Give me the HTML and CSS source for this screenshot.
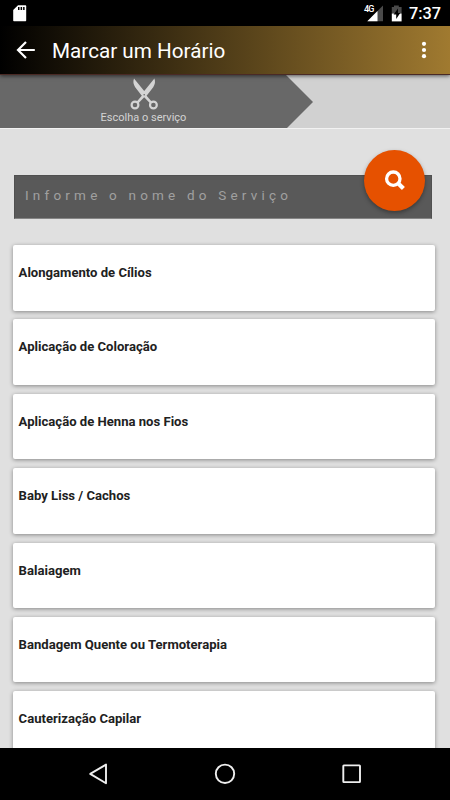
FILE: index.html
```
<!DOCTYPE html>
<html lang="pt-BR">
<head>
    <meta charset="UTF-8">
    <meta name="viewport" content="width=device-width, initial-scale=1.0">
    <title>Marcar um Horário</title>
    <link rel="stylesheet" href="styles.css">
</head>
<body>
    <div class="status-bar">
        <svg class="sd-card" width="14" height="17" viewBox="0 0 14 17">
            <path fill="#fff" d="M5 0.3h7.2c.6 0 1 .4 1 1v13.9c0 .6-.4 1-1 1H1.2c-.6 0-1-.4-1-1V5z"/>
            <path fill="#000" d="M5 2h1.5v3H5zM7.6 2h1.5v3H7.6zM10.1 2h1.5v3h-1.5z"/>
        </svg>
        <div class="status-right">
            <svg width="20" height="18" viewBox="0 0 20 18">
                <path fill="#4a4a4a" d="M19 1.5v15.8H3.3z"/>
                <path fill="#fff" d="M13.5 7v10.3H3.3z"/>
            </svg>
            <span class="network">4G</span>
            <svg class="battery" width="12" height="17" viewBox="0 0 12 17">
                <path fill="#4a4a4a" d="M.8 2H3V.4h4.8V2H10.6v6.5H.8z"/>
                <path fill="#fff" d="M.8 8.5h9.8v7.9H.8z"/>
                <path fill="#000" d="M7 3.6 2.6 9.6h2.6v4.3l4-6H7z"/>
            </svg>
            <span class="clock">7:37</span>
        </div>
    </div>

    <header>
        <svg class="back" width="20" height="20" viewBox="0 0 20 20">
            <path fill="none" stroke="#fff" stroke-width="2.2" d="M18.8 10H2.5M10 2 2 10l8 8"/>
        </svg>
        <h1>Marcar um Horário</h1>
        <svg class="more" width="6" height="18" viewBox="0 0 6 18">
            <g fill="#fff">
                <circle cx="3" cy="2.8" r="2.1"/>
                <circle cx="3" cy="9" r="2.1"/>
                <circle cx="3" cy="15.2" r="2.1"/>
            </g>
        </svg>
    </header>

    <main>
        <div class="steps">
            <div class="step">
                <svg width="28" height="32" viewBox="0 0 28 32">
                    <g fill="#d4d4d4">
                        <path d="M4 .6C2.8 3.5 3.4 6.5 5.2 9.2L11.6 17.6 14.2 19.2 20.2 25.4 22 24 16.2 17.2 15.4 14.6z"/>
                        <path d="M24.4 .6c1.2 2.9.6 5.9-1.2 8.6L16.8 17.6 14.2 19.2 8.2 25.4 6.4 24 12.2 17.2 13 14.6z"/>
                    </g>
                    <circle cx="14.2" cy="16.7" r=".8" fill="#686868"/>
                    <g fill="#686868" stroke="#d4d4d4" stroke-width="2.2">
                        <circle cx="5" cy="27" r="3.4"/>
                        <circle cx="23.4" cy="27" r="3.4"/>
                    </g>
                </svg>
                <span>Escolha o serviço</span>
            </div>
        </div>

        <div class="search">
            <span class="placeholder">Informe o nome do Serviço</span>
            <div class="search-btn">
                <svg width="22" height="22" viewBox="0 0 22 22">
                    <circle cx="9.3" cy="8.7" r="6.7" fill="none" stroke="#fff" stroke-width="3.3"/>
                    <path stroke="#fff" stroke-width="4.2" d="M13.3 12.6l6.1 6"/>
                </svg>
            </div>
        </div>

        <ul class="services">
            <li>Alongamento de Cílios</li>
            <li>Aplicação de Coloração</li>
            <li>Aplicação de Henna nos Fios</li>
            <li>Baby Liss / Cachos</li>
            <li>Balaiagem</li>
            <li>Bandagem Quente ou Termoterapia</li>
            <li>Cauterização Capilar</li>
        </ul>
    </main>

    <nav>
        <svg width="20" height="22" viewBox="0 0 20 22">
            <path fill="none" stroke="#eee" stroke-width="1.9" stroke-linejoin="round" d="M18 1.6v18.6L2.2 10.9z"/>
        </svg>
        <svg width="22" height="22" viewBox="0 0 22 22">
            <circle cx="11" cy="10.8" r="9.2" fill="none" stroke="#eee" stroke-width="1.9"/>
        </svg>
        <svg width="20" height="20" viewBox="0 0 20 20">
            <rect x="1.3" y="1.4" width="16.7" height="16.7" rx=".6" fill="none" stroke="#eee" stroke-width="1.9"/>
        </svg>
    </nav>
</body>
</html>
```

FILE: styles.css
```
* {
    box-sizing: border-box;
}
body {
    font-family: Roboto, sans-serif;
    margin: 0;
    height: 800px;
    display: flex;
    flex-direction: column;
    overflow: hidden;
    background-color: #e0e0e0;
}
svg {
    display: block;
    flex: none;
}
.status-bar {
    flex: none;
    height: 26px;
    padding: 0 9px 0 13px;
    display: flex;
    justify-content: space-between;
    align-items: center;
    background: #000;
    color: #fff;
}
.status-right {
    position: relative;
    display: flex;
    align-items: center;
}
.network {
    position: absolute;
    left: 0;
    top: 1px;
    font-size: 9px;
    line-height: 10px;
    letter-spacing: -0.8px;
    font-weight: 500;
}
.battery {
    margin-left: 7px;
}
.clock {
    margin-left: 6px;
    padding-top: 2px;
    font-size: 16.3px;
    font-weight: 500;
    line-height: 18px;
}
header {
    flex: none;
    position: relative;
    z-index: 1;
    height: 49px;
    padding: 0 23px 0 16px;
    display: flex;
    align-items: center;
    background: linear-gradient(to right, #000, #a07a30);
    border-bottom: 1px solid #4a2a25;
    color: #fff;
    box-shadow: 0 1px 4px rgba(0, 0, 0, 0.6);
}
header h1 {
    margin: 0 auto 0 16px;
    padding-top: 1px;
    font-size: 20.7px;
    font-weight: 400;
}
main {
    flex: 1;
    min-height: 0;
    overflow: hidden;
}
.steps {
    height: 54px;
    background: #d1d1d1;
    border-bottom: 1px solid #f2f2f2;
}
.step {
    width: 313px;
    height: 53px;
    padding: 3px 26px 0 0;
    display: flex;
    flex-direction: column;
    align-items: center;
    background: #686868;
    color: #d4d4d4;
    font-size: 11px;
    line-height: 14px;
    clip-path: polygon(0 0, 286px 0, 313px 27px, 287px 53px, 0 53px);
}
.step span {
    margin-top: 1px;
}
.search {
    position: relative;
    margin: 46px 18px 0 14px;
    height: 44px;
    padding: 11px 10px;
    background: #595959;
    border: 1px solid #505050;
    border-bottom-color: #858585;
}
.placeholder {
    display: block;
    color: #a0a0a0;
    font-size: 13.5px;
    line-height: 16px;
    letter-spacing: 4.2px;
}
.search-btn {
    position: absolute;
    right: 6px;
    top: -26px;
    width: 61px;
    height: 61px;
    display: flex;
    align-items: center;
    justify-content: center;
    border-radius: 50%;
    background: #e65100;
    box-shadow: 0 2px 4px rgba(0, 0, 0, 0.35);
}
.services {
    list-style: none;
    margin: 26px 15px 0 13px;
    padding: 0;
    display: grid;
    gap: 8.9px;
}
.services li {
    height: 65.5px;
    padding: 19px 5.6px;
    background: #fff;
    border-radius: 2px;
    box-shadow: 0 1px 4px rgba(0, 0, 0, 0.4);
    color: #212121;
    font-size: 13.1px;
    font-weight: 700;
    line-height: 17px;
}
nav {
    flex: none;
    position: relative;
    height: 52px;
    padding: 0 88px;
    display: flex;
    align-items: center;
    justify-content: space-between;
    background: #000;
}
```
